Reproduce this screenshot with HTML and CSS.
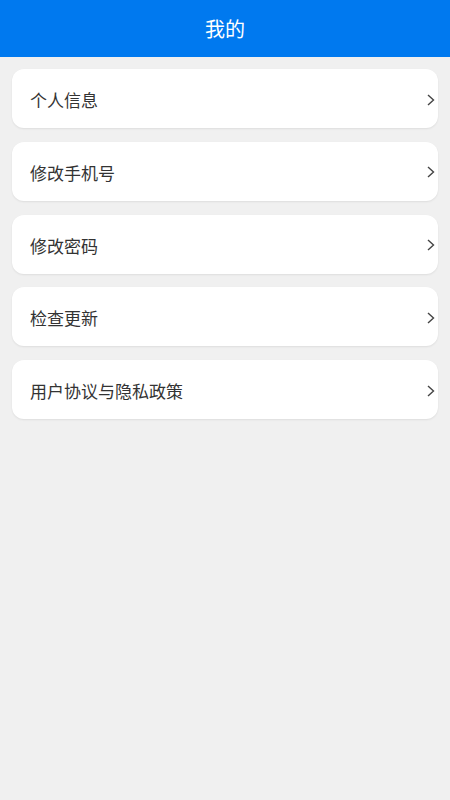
FILE: index.html
```html
<!DOCTYPE html>
<html lang="zh">
<head>
<meta charset="utf-8">
<title>我的</title>
<link rel="stylesheet" href="styles.css">
</head>
<body>
<header class="topbar"><h1 class="title">我的</h1></header>
<main class="list">
  <a class="item"><span class="label">个人信息</span><svg class="chev" viewBox="0 0 8 12"><path d="M1 1l5.5 5L1 11"/></svg></a>
  <a class="item"><span class="label">修改手机号</span><svg class="chev" viewBox="0 0 8 12"><path d="M1 1l5.5 5L1 11"/></svg></a>
  <a class="item"><span class="label">修改密码</span><svg class="chev" viewBox="0 0 8 12"><path d="M1 1l5.5 5L1 11"/></svg></a>
  <a class="item"><span class="label">检查更新</span><svg class="chev" viewBox="0 0 8 12"><path d="M1 1l5.5 5L1 11"/></svg></a>
  <a class="item"><span class="label">用户协议与隐私政策</span><svg class="chev" viewBox="0 0 8 12"><path d="M1 1l5.5 5L1 11"/></svg></a>
</main>
</body>
</html>
```
FILE: styles.css
```css
* { box-sizing: border-box; }
html, body { margin: 0; padding: 0; }
body {
  background: #f0f0f0;
  font-family: "Noto Sans CJK SC", "Noto Sans", sans-serif;
  min-height: 800px;
}
.topbar {
  height: 57px;
  background: #0079ef;
  display: flex;
  align-items: center;
  justify-content: center;
}
.title {
  margin: 0;
  color: #fff;
  font-size: 20px;
  font-weight: 400;
  line-height: 1;
}
.list {
  display: flex;
  flex-direction: column;
  gap: 13.75px;
  padding: 12px 12px 0 12px;
}
.item {
  height: 59px;
  background: #fff;
  border-radius: 12px;
  box-shadow: 0 1px 2px rgba(0,0,0,0.08);
  display: flex;
  align-items: center;
  justify-content: space-between;
  padding: 2px 3px 0 18px;
}
.label {
  font-size: 17px;
  color: #333;
  line-height: 1;
}
.chev {
  width: 8px;
  height: 12px;
  fill: none;
  stroke: #444;
  stroke-width: 1.4;
}
```
